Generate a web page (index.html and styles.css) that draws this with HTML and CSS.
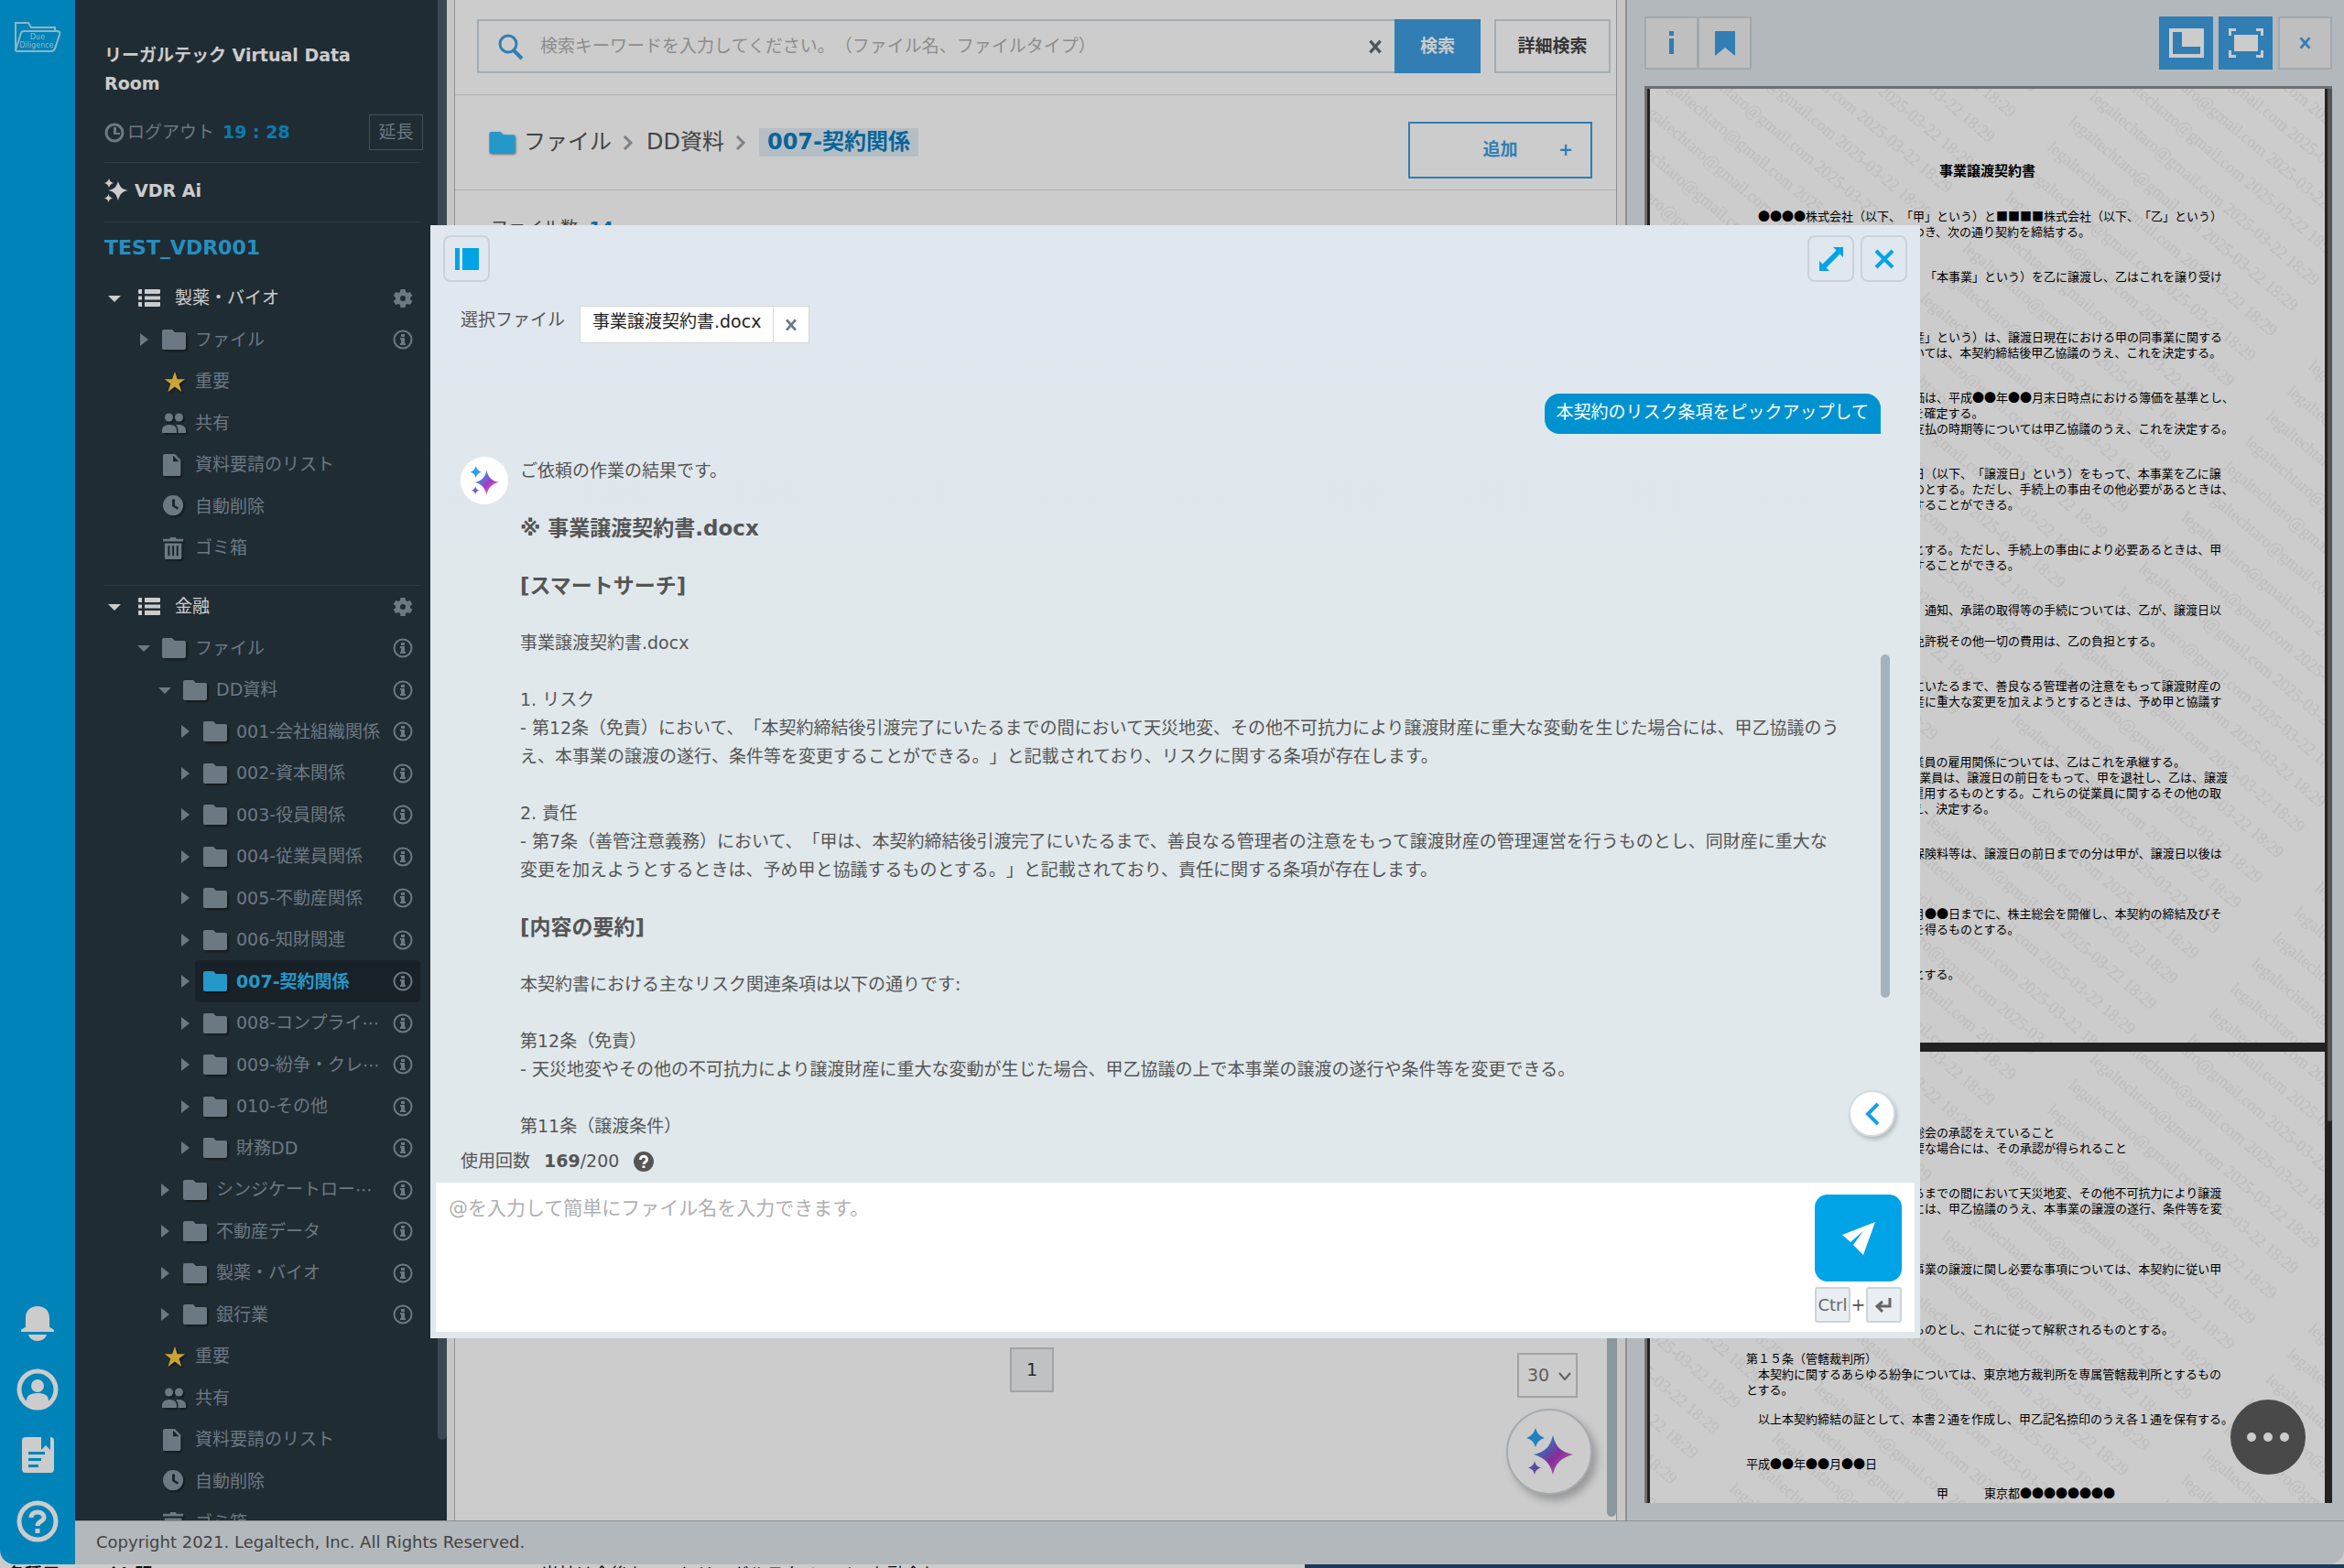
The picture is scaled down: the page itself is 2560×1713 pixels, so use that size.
FILE: index.html
```html
<!DOCTYPE html>
<html lang="ja">
<head>
  <meta charset="UTF-8" />
  <meta name="viewport" content="width=device-width, initial-scale=1" />
  <title>リーガルテック Virtual Data Room</title>
  <link rel="stylesheet" href="styles.css">
</head>

<body>
  <!-- Icons used more than once -->
  <svg class="sprite" aria-hidden="true">
    <defs>
      <linearGradient id="sparkMain" x1="0" y1="0" x2="1" y2="1">
        <stop offset="0.2" stop-color="#2f9be8" />
        <stop offset="0.55" stop-color="#a838c0" />
        <stop offset="0.8" stop-color="#d36ad0" />
      </linearGradient>
      <linearGradient id="sparkSmall" x1="0" y1="0" x2="1" y2="1">
        <stop offset="0" stop-color="#4a6fd8" />
        <stop offset="1" stop-color="#9a4cc0" />
      </linearGradient>
      <pattern id="mark" width="372" height="36" patternUnits="userSpaceOnUse" patternTransform="rotate(40)">
        <text class="mark-text" x="2" y="24">legaltechtaro@gmail.com 2025-03-22 18:29</text>
      </pattern>
    </defs>
    <symbol id="folder" viewBox="0 0 26 22"><path d="M2 0h9l3 3h10a2 2 0 0 1 2 2v15a2 2 0 0 1-2 2H2a2 2 0 0 1-2-2V2a2 2 0 0 1 2-2z" /></symbol>
    <symbol id="star" viewBox="0 0 26 26"><path d="M14 1l3 9h9l-7 5.500 3 9.500-8-6-8 6 3-9.500L2 10h9z" /></symbol>
    <symbol id="people" viewBox="0 0 26 22"><circle cx="7.500" cy="5" r="4.500" /><circle cx="18.500" cy="5" r="4.500" /><path d="M0 22v-3c0-4 4-6 8-6s8 2 8 6v3zM17.500 22v-3c0-2.500-1-4.500-2.500-5.600 5-1.400 11 .8 11 5.600v3z" /></symbol>
    <symbol id="doc" viewBox="0 0 26 26"><path d="M2 0h12l7 7v17a2 2 0 0 1-2 2H2a2 2 0 0 1-2-2V2a2 2 0 0 1 2-2zm10 2v7h7z" fill-rule="evenodd" /></symbol>
    <symbol id="clock-solid" viewBox="0 0 26 26"><path d="M12 0a12 12 0 1 1 0 24 12 12 0 0 1 0-24zm-1 5v8l6 4 1.500-2.500L14 12V5z" fill-rule="evenodd" /></symbol>
    <symbol id="trash" viewBox="0 0 26 26"><path d="M0 2h8l1-2h6l1 2h8v3H0zM2 7h20v17a2 2 0 0 1-2 2H4a2 2 0 0 1-2-2zm4 3v12h2V10zm5 0v12h2V10zm5 0v12h2V10z" fill-rule="evenodd" /></symbol>
    <symbol id="list" viewBox="0 0 24 20"><path d="M1 0h3v5H1a1 1 0 0 1-1-1V1a1 1 0 0 1 1-1zM7 0h16a1 1 0 0 1 1 1v3a1 1 0 0 1-1 1H7zM0 7.500h4v4H0zM7 7.500h17v4H7zM0 14h4v5H1a1 1 0 0 1-1-1zM7 14h17v4a1 1 0 0 1-1 1H7z" /></symbol>
    <symbol id="down" viewBox="0 0 22 22"><path d="M4 8h14l-7 7z" /></symbol>
    <symbol id="right" viewBox="0 0 22 22"><path d="M7 4l9 7-9 7z" /></symbol>
    <symbol id="info" viewBox="0 0 22 22"><circle cx="11" cy="11" r="9.500" fill="none" stroke="currentColor" stroke-width="2" /><path d="M9 5h4v3H9zM8 9h5v6h1v2H8v-2h1v-4H8z" /></symbol>
    <symbol id="gear" viewBox="0 0 22 22"><path d="M8.500 1h5l.6 3 1.800 1 3-1 2.400 4-2.300 2v2l2.300 2-2.400 4-3-1-1.800 1-.6 3h-5l-.6-3-1.800-1-3 1L.7 14 3 12v-2L.7 8l2.400-4 3 1 1.800-1zM11 8a3 3 0 1 0 0 6 3 3 0 0 0 0-6z" fill-rule="evenodd" /></symbol>
    <symbol id="cross" viewBox="0 0 20 20"><path d="M3 2l14 16M17 2L3 18" fill="none" stroke="currentColor" stroke-width="4" /></symbol>
    <symbol id="chevron" viewBox="0 0 12 18"><path d="M2 2l7 7-7 7" fill="none" stroke="currentColor" stroke-width="3" /></symbol>
    <symbol id="sparkle" viewBox="0 0 26 26"><path d="M15 3c2 6.500 4 8.500 11 10-7 1.500-9 4-11 11-2-7-4-9.500-11-11 7-1.500 9-3.500 11-10zM5 0c1 3 2 4.200 5 5-3 .8-4 2-5 5-1-3-2-4.200-5-5 3-.8 4-2 5-5zM4.500 17c.8 2.600 1.700 3.700 4.500 4.500-2.800.8-3.700 1.900-4.500 4.500-.8-2.600-1.700-3.700-4.500-4.500 2.800-.8 3.700-1.900 4.500-4.500z" /></symbol>
    <symbol id="sparkle-color" viewBox="0 0 52 52">
      <path d="M30 8c3 12 8 18 22 21-14 4-19 10-22 22-3-12-8-18-21-22 13-3 18-9 21-21z" fill="url(#sparkMain)" />
      <path d="M11 0c2 6 4 8.500 10 11-6 2-8 4-10 10-2-6-4-8-10-10 6-2.500 8-5 10-11z" fill="#2aa0f0" />
      <path d="M10 36c1 4.500 3 6.500 7 7.500-4 1-6 3-7 7.500-1-4.500-3-6.500-7-7.500 4-1 6-3 7-7.500z" fill="url(#sparkSmall)" />
    </symbol>
  </svg>

  <div class="window">
    <nav class="rail">
      <a href="#" class="rail-logo" aria-label="Due Diligence">
        <svg class="line" viewBox="0 0 52 34" width="52" height="34" stroke-width="2">
          <path d="M2 31V1h14l3 5h26v4M2 31L8 12c.5-1.500 1-2 3-2h36c3 0 4 1 3 4l-5 15c-1 2-2 3-4 3H3z" />
          <text x="26" y="19" class="logo-text">Due</text>
          <text x="25" y="28" class="logo-text">Diligence</text>
        </svg>
      </a>
      <div class="rail-menu">
        <a href="#" aria-label="通知">
          <svg viewBox="0 0 46 46" width="46" height="46"><path d="M23 4c8 0 13 5 13 13v9c0 2 5 2 5 5v1H5v-1c0-3 5-3 5-5v-9C10 9 15 4 23 4zM13 35h20c-1 4-5 7-10 7s-9-3-10-7z" /></svg>
        </a>
        <a href="#" aria-label="アカウント">
          <svg viewBox="0 0 46 46" width="46" height="46"><circle cx="23" cy="23" r="20" fill="none" stroke="currentColor" stroke-width="5" /><circle cx="23" cy="19" r="7" /><path d="M11 38v-3c0-6 5-8 12-8s12 2 12 8v3l-7 5H18z" /></svg>
        </a>
        <a href="#" aria-label="お知らせ">
          <svg viewBox="0 0 46 46" width="46" height="46"><path d="M10 3h17v14l5-5 5 5V3a4 4 0 0 1 4 4v31a4 4 0 0 1-4 4H10a4 4 0 0 1-4-4V7a4 4 0 0 1 4-4zm3 16v3h18v-3zm0 7v3h14v-3zm0 7v3h11v-3z" fill-rule="evenodd" /></svg>
        </a>
        <a href="#" aria-label="ヘルプ">
          <svg class="line" viewBox="0 0 46 46" width="46" height="46" stroke-width="5"><circle cx="23" cy="23" r="20" /><path d="M16 19c0-8 14-8 14 0 0 4-7 4-7 9M23 31v5" /></svg>
        </a>
      </div>
    </nav>

    <div class="app">
      <div class="workspace">
        <aside class="sidebar">
          <h1 class="site-name">リーガルテック Virtual Data Room</h1>
          <div class="session">
            <svg class="session-icon" viewBox="0 0 22 22"><circle cx="11" cy="11" r="9" fill="none" stroke="currentColor" stroke-width="3" /><path d="M10 5h3v6h4v2h-7z" /></svg>
            <span>ログアウト</span>
            <strong>19 : 28</strong>
            <button class="extend">延長</button>
          </div>
          <a href="#" class="vdr-ai"><svg class="vdr-icon"><use href="#sparkle" /></svg>VDR Ai</a>
          <h2 class="room-name">TEST_VDR001</h2>

          <ul class="tree">
            <li class="row root"><svg class="caret"><use href="#down" /></svg><a href="#" class="node"><svg class="icon"><use href="#list" /></svg><span>製薬・バイオ</span><svg class="info"><use href="#gear" /></svg></a></li>
            <li class="row level-1"><svg class="caret"><use href="#right" /></svg><a href="#" class="node"><svg class="icon"><use href="#folder" /></svg><span>ファイル</span><svg class="info"><use href="#info" /></svg></a></li>
            <li class="row leaf"><a href="#" class="node"><svg class="icon star"><use href="#star" /></svg><span>重要</span></a></li>
            <li class="row leaf"><a href="#" class="node"><svg class="icon"><use href="#people" /></svg><span>共有</span></a></li>
            <li class="row leaf"><a href="#" class="node"><svg class="icon"><use href="#doc" /></svg><span>資料要請のリスト</span></a></li>
            <li class="row leaf"><a href="#" class="node"><svg class="icon"><use href="#clock-solid" /></svg><span>自動削除</span></a></li>
            <li class="row leaf"><a href="#" class="node"><svg class="icon"><use href="#trash" /></svg><span>ゴミ箱</span></a></li>
          </ul>
          <ul class="tree">
            <li class="row root"><svg class="caret"><use href="#down" /></svg><a href="#" class="node"><svg class="icon"><use href="#list" /></svg><span>金融</span><svg class="info"><use href="#gear" /></svg></a></li>
            <li class="row level-1"><svg class="caret"><use href="#down" /></svg><a href="#" class="node"><svg class="icon"><use href="#folder" /></svg><span>ファイル</span><svg class="info"><use href="#info" /></svg></a></li>
            <li class="row level-2"><svg class="caret"><use href="#down" /></svg><a href="#" class="node"><svg class="icon"><use href="#folder" /></svg><span>DD資料</span><svg class="info"><use href="#info" /></svg></a></li>
            <li class="row level-3"><svg class="caret"><use href="#right" /></svg><a href="#" class="node"><svg class="icon"><use href="#folder" /></svg><span>001-会社組織関係</span><svg class="info"><use href="#info" /></svg></a></li>
            <li class="row level-3"><svg class="caret"><use href="#right" /></svg><a href="#" class="node"><svg class="icon"><use href="#folder" /></svg><span>002-資本関係</span><svg class="info"><use href="#info" /></svg></a></li>
            <li class="row level-3"><svg class="caret"><use href="#right" /></svg><a href="#" class="node"><svg class="icon"><use href="#folder" /></svg><span>003-役員関係</span><svg class="info"><use href="#info" /></svg></a></li>
            <li class="row level-3"><svg class="caret"><use href="#right" /></svg><a href="#" class="node"><svg class="icon"><use href="#folder" /></svg><span>004-従業員関係</span><svg class="info"><use href="#info" /></svg></a></li>
            <li class="row level-3"><svg class="caret"><use href="#right" /></svg><a href="#" class="node"><svg class="icon"><use href="#folder" /></svg><span>005-不動産関係</span><svg class="info"><use href="#info" /></svg></a></li>
            <li class="row level-3"><svg class="caret"><use href="#right" /></svg><a href="#" class="node"><svg class="icon"><use href="#folder" /></svg><span>006-知財関連</span><svg class="info"><use href="#info" /></svg></a></li>
            <li class="row level-3"><svg class="caret"><use href="#right" /></svg><a href="#" class="node active"><svg class="icon"><use href="#folder" /></svg><span>007-契約関係</span><svg class="info"><use href="#info" /></svg></a></li>
            <li class="row level-3"><svg class="caret"><use href="#right" /></svg><a href="#" class="node"><svg class="icon"><use href="#folder" /></svg><span>008-コンプライ⋯</span><svg class="info"><use href="#info" /></svg></a></li>
            <li class="row level-3"><svg class="caret"><use href="#right" /></svg><a href="#" class="node"><svg class="icon"><use href="#folder" /></svg><span>009-紛争・クレ⋯</span><svg class="info"><use href="#info" /></svg></a></li>
            <li class="row level-3"><svg class="caret"><use href="#right" /></svg><a href="#" class="node"><svg class="icon"><use href="#folder" /></svg><span>010-その他</span><svg class="info"><use href="#info" /></svg></a></li>
            <li class="row level-3"><svg class="caret"><use href="#right" /></svg><a href="#" class="node"><svg class="icon"><use href="#folder" /></svg><span>財務DD</span><svg class="info"><use href="#info" /></svg></a></li>
            <li class="row level-2"><svg class="caret"><use href="#right" /></svg><a href="#" class="node"><svg class="icon"><use href="#folder" /></svg><span>シンジケートロー⋯</span><svg class="info"><use href="#info" /></svg></a></li>
            <li class="row level-2"><svg class="caret"><use href="#right" /></svg><a href="#" class="node"><svg class="icon"><use href="#folder" /></svg><span>不動産データ</span><svg class="info"><use href="#info" /></svg></a></li>
            <li class="row level-2"><svg class="caret"><use href="#right" /></svg><a href="#" class="node"><svg class="icon"><use href="#folder" /></svg><span>製薬・バイオ</span><svg class="info"><use href="#info" /></svg></a></li>
            <li class="row level-2"><svg class="caret"><use href="#right" /></svg><a href="#" class="node"><svg class="icon"><use href="#folder" /></svg><span>銀行業</span><svg class="info"><use href="#info" /></svg></a></li>
            <li class="row leaf"><a href="#" class="node"><svg class="icon star"><use href="#star" /></svg><span>重要</span></a></li>
            <li class="row leaf"><a href="#" class="node"><svg class="icon"><use href="#people" /></svg><span>共有</span></a></li>
            <li class="row leaf"><a href="#" class="node"><svg class="icon"><use href="#doc" /></svg><span>資料要請のリスト</span></a></li>
            <li class="row leaf"><a href="#" class="node"><svg class="icon"><use href="#clock-solid" /></svg><span>自動削除</span></a></li>
            <li class="row leaf"><a href="#" class="node"><svg class="icon"><use href="#trash" /></svg><span>ゴミ箱</span></a></li>
          </ul>
          <div class="thumb sidebar-thumb"></div>
        </aside>

        <main class="main">
          <form class="search">
            <div class="search-box">
              <svg class="line" viewBox="0 0 30 30" width="30" height="30"><circle cx="12" cy="12" r="9" stroke-width="3" /><path d="M18 19l9 9" stroke-width="4" /></svg>
              <input type="text" aria-label="検索キーワード" placeholder="検索キーワードを入力してください。（ファイル名、ファイルタイプ）" />
              <button type="button" class="clear" aria-label="クリア"><svg><use href="#cross" /></svg></button>
            </div>
            <button type="button" class="search-button">検索</button>
            <button type="button" class="detail-button">詳細検索</button>
          </form>
          <div class="path">
            <svg class="path-folder"><use href="#folder" /></svg>
            <a href="#">ファイル</a>
            <svg class="path-arrow"><use href="#chevron" /></svg>
            <a href="#">DD資料</a>
            <svg class="path-arrow"><use href="#chevron" /></svg>
            <a href="#" class="current">007-契約関係</a>
            <button class="add-button"><span>追加</span><b>+</b></button>
          </div>
          <p class="count">ファイル数: <strong>14</strong></p>
          <div class="pager">
            <button class="page-button">1</button>
            <label class="page-size">
              <select aria-label="表示件数"><option>30</option></select>
              <svg class="line" viewBox="0 0 14 14" width="14" height="14" stroke-width="2"><path d="M1 4l6 7 6-7" /></svg>
            </label>
          </div>
          <button class="ai-fab" aria-label="VDR Ai"><svg width="52" height="52"><use href="#sparkle-color" /></svg></button>
          <div class="thumb main-thumb"></div>
        </main>

        <section class="preview">
          <div class="preview-bar">
            <button class="tool" aria-label="情報"><svg viewBox="0 0 30 36" width="30" height="36"><path d="M12 5h5v5h-5zM12 13h5v17h-5z" /></svg></button>
            <button class="tool" aria-label="ブックマーク"><svg viewBox="0 0 30 36" width="30" height="36"><path d="M4 5h22v27l-11-9-11 9z" /></svg></button>
            <span class="grow"></span>
            <button class="tool solid" aria-label="分割表示"><svg viewBox="0 0 38 32" width="38" height="32"><path d="M0 0h38v32H0zm4 4v24h30v-8H14V4z" fill-rule="evenodd" /></svg></button>
            <button class="tool solid" aria-label="全画面"><svg viewBox="0 0 38 32" width="38" height="32"><path d="M6 7h26v18H6zM0 0h8v3H3v5H0zM30 0h8v8h-3V3h-5zM0 24h3v5h5v3H0zM35 24h3v8h-8v-3h5z" /></svg></button>
            <button class="tool" aria-label="閉じる"><svg width="15" height="14"><use href="#cross" /></svg></button>
          </div>

          <div class="viewer">
            <article class="page page-one">
              <h2>事業譲渡契約書</h2>
              <p>　●●●●株式会社（以下、「甲」という）と■■■■株式会社（以下、「乙」という）
は、甲が営む下記の事業譲渡につき、次の通り契約を締結する。</p>
              <p>第１条（事業譲渡）
　甲は、甲の営む全事業（以下、「本事業」という）を乙に譲渡し、乙はこれを譲り受け
る。</p>
              <p>第２条（譲渡財産）
　前項の財産（以下、「譲渡財産」という）は、譲渡日現在における甲の同事業に関する
資産とし、その明細と範囲については、本契約締結後甲乙協議のうえ、これを決定する。</p>
              <p>第３条（譲渡代金）
　本事業にかかる譲渡財産の対価は、平成●●年●●月末日時点における簿価を基準とし、
甲乙協議のうえで譲渡代金の額を確定する。
２　前項に定めた譲渡代金等の支払の時期等については甲乙協議のうえ、これを決定する。</p>
              <p>第４条（譲渡日）
　甲は、平成●●年●●月●●日（以下、「譲渡日」という）をもって、本事業を乙に譲
渡し、乙はこれを譲り受けるものとする。ただし、手続上の事由その他必要があるときは、
甲乙協議のうえ、この日を変更することができる。</p>
              <p>第５条（引渡）
　譲渡財産の引渡期日は譲渡日とする。ただし、手続上の事由により必要あるときは、甲
乙協議のうえ、引渡期日を変更することができる。</p>
              <p>第６条（移転手続）
　譲渡財産の移転に伴う登記等、通知、承諾の取得等の手続については、乙が、譲渡日以
後遅滞なく行う。
２　前項の手続きに要する登録免許税その他一切の費用は、乙の負担とする。</p>
              <p>第７条（善管注意義務）
　甲は、本契約締結後引渡完了にいたるまで、善良なる管理者の注意をもって譲渡財産の
管理運営を行うものとし、同財産に重大な変更を加えようとするときは、予め甲と協議す
るものとする。</p>
              <p>第８条（従業員）
　甲の本事業に従事している従業員の雇用関係については、乙はこれを承継する。
2　前項の規定に基づき本件の従業員は、譲渡日の前日をもって、甲を退社し、乙は、譲渡
日の当日をもってこれらの者を雇用するものとする。これらの従業員に関するその他の取
扱いに関しては、甲乙協議のうえ、決定する。</p>
              <p>第９条（公租公課）
　譲渡財産にかかる公租公課、保険料等は、譲渡日の前日までの分は甲が、譲渡日以後は
乙が負担する。</p>
              <p>第１０条（株主総会）
　甲及び乙は、平成●●年●●月●●日までに、株主総会を開催し、本契約の締結及びそ
の履行につき必要な一切の承認を得るものとする。</p>
              <p>第１１条（競業避止）
　甲は競業避止義務を負うものとする。</p>
              <svg class="watermark" aria-hidden="true"><rect width="100%" height="100%" fill="url(#mark)" /></svg>
            </article>
            <article class="page page-two">
              <p>（１）譲渡日までに甲乙の株主総会の承認をえていること
（２）関係官庁等の承認等が必要な場合には、その承認が得られること</p>
              <p>第１２条（免責）
　本契約締結後引渡完了にいたるまでの間において天災地変、その他不可抗力により譲渡
財産に重大な変動を生じた場合には、甲乙協議のうえ、本事業の譲渡の遂行、条件等を変
更することができる。</p>
              <p>第１３条（協議）
　本契約に定めのない事項で本事業の譲渡に関し必要な事項については、本契約に従い甲
乙協議して定める。</p>
              <p>第１４条（準拠法）
　本契約は、日本法に準拠するものとし、これに従って解釈されるものとする。</p>
              <p>第１５条（管轄裁判所）
　本契約に関するあらゆる紛争については、東京地方裁判所を専属管轄裁判所とするもの
とする。</p>
              <p>　以上本契約締結の証として、本書２通を作成し、甲乙記名捺印のうえ各１通を保有する。</p>
              <p class="sign-date">平成●●年●●月●●日</p>
              <p>　　　　　　　　　　　　　　　　甲　　　東京都●●●●●●●●</p>
              <svg class="watermark" aria-hidden="true"><rect width="100%" height="100%" fill="url(#mark)" /></svg>
            </article>
            <div class="thumb viewer-thumb"></div>
            <button class="more" aria-label="メニュー"><i></i><i></i><i></i></button>
          </div>
        </section>
      </div>

      <footer class="footer">Copyright 2021. Legaltech, Inc. All Rights Reserved.</footer>
    </div>

    <!-- AI chat -->
    <div class="overlay"></div>
    <div class="chat" role="dialog" aria-label="VDR Ai">
      <div class="chat-bar">
        <button class="chat-tool" aria-label="履歴"><svg viewBox="0 0 26 24" width="26" height="24"><path d="M0 0h5v24H0zM8 0h18v24H8z" /></svg></button>
        <span class="grow"></span>
        <button class="chat-tool" aria-label="拡大"><svg viewBox="0 0 26 26" width="26" height="26"><path d="M15 0h11v11l-3.500-3.500-15 15L11 26H0V15l3.500 3.500 15-15z" /></svg></button>
        <button class="chat-tool" aria-label="閉じる"><svg class="line" viewBox="0 0 22 22" width="22" height="22" stroke-width="4"><path d="M2 2l18 18M20 2L2 20" /></svg></button>
      </div>
      <div class="chat-files">
        <span>選択ファイル</span>
        <span class="chip">事業譲渡契約書.docx<button aria-label="削除"><svg width="14" height="14"><use href="#cross" /></svg></button></span>
      </div>
      <div class="chat-log">
        <p class="question">本契約のリスク条項をピックアップして</p>
        <div class="answer">
          <span class="avatar"><svg width="32" height="32"><use href="#sparkle-color" /></svg></span>
          <div class="answer-text">
            <p>ご依頼の作業の結果です。</p>
            <h3>※ 事業譲渡契約書.docx</h3>
            <h3>[スマートサーチ]</h3>
            <p>事業譲渡契約書.docx</p>
            <p>1. リスク<br>- 第12条（免責）において、「本契約締結後引渡完了にいたるまでの間において天災地変、その他不可抗力により譲渡財産に重大な変動を生じた場合には、甲乙協議のうえ、本事業の譲渡の遂行、条件等を変更することができる。」と記載されており、リスクに関する条項が存在します。</p>
            <p>2. 責任<br>- 第7条（善管注意義務）において、「甲は、本契約締結後引渡完了にいたるまで、善良なる管理者の注意をもって譲渡財産の管理運営を行うものとし、同財産に重大な変更を加えようとするときは、予め甲と協議するものとする。」と記載されており、責任に関する条項が存在します。</p>
            <h3>[内容の要約]</h3>
            <p>本契約書における主なリスク関連条項は以下の通りです:</p>
            <p>第12条（免責）<br>- 天災地変やその他の不可抗力により譲渡財産に重大な変動が生じた場合、甲乙協議の上で本事業の譲渡の遂行や条件等を変更できる。</p>
            <p>第11条（譲渡条件）</p>
          </div>
        </div>
      </div>
      <p class="usage">使用回数 <span><strong>169</strong>/200</span>
        <svg viewBox="0 0 24 24" width="24" height="24"><circle cx="12" cy="12" r="11" fill="#555" /><path d="M8.500 10c0-5 7-5 7 0 0 2.500-3.500 2.500-3.500 5M12 16.500V19" fill="none" stroke="#fff" stroke-width="3" /></svg>
      </p>
      <form class="composer">
        <textarea aria-label="メッセージ" placeholder="@を入力して簡単にファイル名を入力できます。"></textarea>
        <div class="send-side">
          <button type="button" class="send" aria-label="送信"><svg viewBox="0 0 38 38" width="38" height="38"><path d="M37 1L1 15l9 8 14-12-11 15 11 11z" /></svg></button>
          <div class="keys"><kbd>Ctrl</kbd><span>+</span><kbd><svg class="line" viewBox="0 0 20 18" width="20" height="18" stroke-width="3"><path d="M17 1v9H4M9 5l-6 5 6 6" /></svg></kbd></div>
        </div>
      </form>
      <div class="thumb chat-thumb"></div>
      <button class="back" aria-label="戻る"><svg class="line" viewBox="0 0 18 26" width="18" height="26" stroke-width="4"><path d="M15 2L4 13l11 11" /></svg></button>
    </div>
  </div>

  <!-- Sliver of the page behind the window -->
  <div class="behind"><span class="behind-a">各種用 ソハイト明</span><span class="behind-b">当社は今後も、AIとリーガルテクノロジーを融合し</span><span class="behind-c"></span></div>
</body>
</html>
```

FILE: styles.css
```css
* {
  margin: 0;
  padding: 0;
  box-sizing: border-box;
}

body {
  font-family: "DejaVu Sans", "Noto Sans CJK JP", sans-serif;
  font-size: 19px;
  line-height: 31px;
  color: #555;
  background-color: #ccc;
  height: 100vh;
  display: flex;
  flex-direction: column;
  overflow: hidden;
  text-spacing-trim: space-all;
}

button,
input,
textarea,
select {
  font: inherit;
  color: inherit;
  background: none;
  border: none;
  outline: none;
}

button {
  cursor: pointer;
  display: flex;
  align-items: center;
  justify-content: center;
}

a {
  color: inherit;
  text-decoration: none;
}

svg {
  fill: currentColor;
  flex-shrink: 0;
}

svg.line {
  fill: none;
  stroke: currentColor;
}

.sprite {
  position: absolute;
  width: 0;
  height: 0;
}

.grow {
  flex: 1;
}

/* Drawn scrollbar handles */
.thumb {
  position: absolute;
  border-radius: 5px;
}

.window {
  flex: 1;
  min-height: 0;
  position: relative;
  display: flex;
  overflow: hidden;
  border-radius: 0 0 16px 16px;
}

/* Left icon rail */
.rail {
  width: 82px;
  background-color: #00a4e6;
  color: #fff;
  display: flex;
  flex-direction: column;
  align-items: center;
  justify-content: space-between;
  padding: 24px 0;
}

.logo-text {
  font-size: 8px;
  fill: #fff;
  stroke: none;
  text-anchor: middle;
}

.rail-logo {
  opacity: 0.7;
}

.rail-menu {
  display: flex;
  flex-direction: column;
  gap: 26px;
}

.rail-menu a {
  display: flex;
}

.app {
  flex: 1;
  min-width: 0;
  display: flex;
  flex-direction: column;
}

.workspace {
  flex: 1;
  min-height: 0;
  display: flex;
  background-color: #f8f8f8;
}

/* Sidebar */
.sidebar {
  width: 406px;
  flex-shrink: 0;
  position: relative;
  overflow: hidden;
  background-color: #293841;
  color: #8797a3;
  padding: 45px 29px 0 32px;
}

.site-name {
  font-size: 19px;
  color: #fff;
  padding-right: 40px;
}

.session {
  display: flex;
  align-items: center;
  height: 70px;
  padding-top: 5px;
  margin-right: -3px;
}

.session-icon {
  width: 22px;
  height: 22px;
  margin-right: 3px;
}

.session strong {
  color: #0c9bda;
  margin-left: 9px;
}

.extend {
  margin-left: auto;
  width: 59px;
  height: 39px;
  border: 1px solid #566570;
}

.vdr-ai {
  display: flex;
  align-items: center;
  height: 66px;
  padding-bottom: 4px;
  border-top: 1px solid #3c4c57;
  border-bottom: 1px solid #3c4c57;
  color: #fff;
  font-weight: bold;
}

.vdr-icon {
  width: 26px;
  height: 26px;
  margin-right: 7px;
}

.room-name {
  font-size: 22px;
  line-height: 56px;
  margin-bottom: 4px;
  color: #2db3f0;
}

.tree {
  list-style: none;
}

.tree + .tree {
  border-top: 1px solid #3c4c57;
  margin-top: 18px;
}

.row {
  display: flex;
  align-items: center;
  height: 45px;
}

.row:nth-child(even) {
  height: 46px;
}

.level-1 {
  padding-left: 32px;
}

.level-2 {
  padding-left: 55px;
}

.level-3 {
  padding-left: 77px;
}

.leaf {
  padding-left: 54px;
}

.caret {
  width: 22px;
  height: 22px;
}

.node {
  flex: 1;
  height: 100%;
  display: flex;
  align-items: center;
  gap: 10px;
  padding-left: 9px;
  border-radius: 4px;
  white-space: nowrap;
}

.node.active {
  background-color: #202a33;
  color: #2dbffb;
  font-weight: bold;
}

.root {
  color: #fff;
}

.root .node {
  gap: 16px;
  padding-left: 15px;
}

.icon {
  width: 26px;
  height: 24px;
  filter: drop-shadow(2px 2px 1px rgba(0, 0, 0, 0.4));
}

.root .icon {
  width: 24px;
  height: 20px;
  filter: none;
}

.star {
  color: #ffce42;
}

.info {
  width: 22px;
  height: 22px;
  margin-left: auto;
  margin-right: 8px;
  color: #8797a3;
}

.sidebar-thumb {
  right: 0;
  top: -10px;
  bottom: 88px;
  width: 10px;
  background-color: #485a69;
}

/* File list */
.main {
  flex: 1;
  min-width: 0;
  position: relative;
  display: flex;
  flex-direction: column;
  margin: 0 9px 0 8px;
  background-color: #fff;
  border-left: 1px solid #b5b5b5;
  border-right: 1px solid #b5b5b5;
}

.search {
  display: flex;
  padding: 21px 6px 23px 24px;
  border-bottom: 1px solid #dcdce4;
}

.search-box {
  flex: 1;
  height: 59px;
  display: flex;
  align-items: center;
  border: 2px solid #ced8de;
  border-right: none;
  padding-left: 20px;
  color: #3c9ee0;
}

.search-box input {
  flex: 1;
  padding-left: 17px;
  color: #555;
}

.search-box input::placeholder {
  color: #b0b0b0;
}

.clear {
  width: 42px;
  height: 42px;
  color: #5d6b78;
}

.clear svg {
  width: 16px;
  height: 16px;
}

.search-button {
  width: 94px;
  background-color: #3c9ee0;
  color: #fff;
  font-weight: bold;
}

.detail-button {
  width: 127px;
  margin-left: 15px;
  border: 2px solid #ced8de;
  color: #444;
  font-weight: bold;
}

.path {
  height: 104px;
  display: flex;
  align-items: center;
  padding: 0 26px 0 37px;
  border-bottom: 1px solid #dcdce4;
  font-size: 24px;
}

.path-folder {
  width: 29px;
  height: 24px;
  margin-right: 9px;
  color: #2dbffb;
  filter: drop-shadow(1px 1px 1px rgba(0, 0, 0, 0.4));
}

.path-arrow {
  width: 12px;
  height: 18px;
  margin: 0 14px 0 12px;
  color: #a0a0aa;
}

.path .current {
  padding: 0 9px;
  background-color: #e3eef5;
  color: #0b7ec0;
  font-weight: bold;
}

.add-button {
  margin-left: auto;
  align-self: flex-end;
  margin-bottom: 12px;
  padding-bottom: 2px;
  width: 201px;
  height: 62px;
  border: 2px solid #3c9ee0;
  color: #3c9ee0;
  font-size: 19px;
  font-weight: bold;
  display: grid;
  grid-template-columns: 1fr auto 1fr;
}

.add-button span {
  grid-column: 2;
}

.add-button b {
  justify-self: end;
  padding-right: 19px;
}

.count {
  flex: 1;
  padding: 26px 39px;
}

.count strong {
  color: #0b86c8;
}

.pager {
  display: grid;
  grid-template-columns: 1fr auto 1fr;
  align-items: start;
  padding: 0 42px 134px 34px;
}

.page-button {
  grid-column: 2;
  width: 48px;
  height: 49px;
  background-color: #f0f2f4;
  border: 2px solid #ccc;
  color: #333;
}

.page-size {
  justify-self: end;
  margin-top: 6px;
  width: 66px;
  height: 49px;
  border: 2px solid #ccc;
  display: flex;
  align-items: center;
  padding: 0 5px 0 9px;
  color: #777;
}

.page-size select {
  flex: 1;
  min-width: 0;
  appearance: none;
}

.ai-fab {
  position: absolute;
  right: 26px;
  bottom: 28px;
  width: 94px;
  height: 94px;
  border: 2px solid #d0d6dc;
  border-radius: 50%;
  background-color: #fff;
  box-shadow: 5px 6px 8px rgba(0, 0, 0, 0.25);
}

.main-thumb {
  right: 0;
  top: 600px;
  bottom: 4px;
  width: 10px;
  background-color: #adbdc7;
}

/* Document preview */
.preview {
  width: 785px;
  flex-shrink: 0;
  display: flex;
  flex-direction: column;
  padding: 18px 13px 19px 19px;
  background-color: #e0e6eb;
  border-left: 2px solid #b5b5b5;
}

.preview-bar {
  display: flex;
  gap: 6px;
  margin-bottom: 18px;
}

.tool {
  width: 59px;
  height: 58px;
  border: 2px solid #ccd3d9;
  background-color: #efefef;
  color: #3c9ee0;
}

.tool + .tool:nth-child(2) {
  margin-left: -7px;
}

.tool.solid {
  background-color: #3c9ee0;
  border: none;
  color: #fff;
}

.viewer {
  flex: 1;
  min-height: 0;
  position: relative;
  overflow: hidden;
  background-color: #2b2b2b;
  border-top: 3px solid #8c8c8c;
  border-left: 3px solid #8c8c8c;
  padding: 0 8px 0 3px;
}

.page {
  position: relative;
  background-color: #fff;
  color: #000;
  font-family: "Noto Sans CJK JP", sans-serif;
  font-size: 13px;
  line-height: 17px;
  padding: 0 105px;
}

.page-one {
  height: 1042px;
  padding-top: 74px;
  margin-bottom: 10px;
}

.page-two {
  height: 1042px;
  padding-top: 79px;
}

.page h2 {
  font-size: 15px;
  line-height: 30px;
  margin-bottom: 26px;
  text-align: center;
}

.page p {
  margin-bottom: 15px;
  white-space: pre;
}

.page .sign-date {
  margin-top: 32px;
}

.watermark {
  position: absolute;
  top: 0;
  left: 0;
  width: 100%;
  height: 100%;
}

.mark-text {
  font-family: "Liberation Serif", serif;
  font-size: 18px;
  fill: rgba(0, 0, 0, 0.08);
}

.viewer-thumb {
  right: 0;
  top: -10px;
  width: 5px;
  height: 1138px;
  background-color: #6a6a6a;
}

.more {
  position: absolute;
  right: 29px;
  bottom: 31px;
  width: 82px;
  height: 82px;
  border-radius: 50%;
  background-color: #5c5c5c;
  gap: 8px;
}

.more i {
  width: 10px;
  height: 10px;
  border-radius: 50%;
  background-color: #fff;
}

.footer {
  height: 48px;
  line-height: 46px;
  padding-left: 23px;
  font-size: 18px;
  background-color: #e0e6eb;
  border-top: 1px solid #b5b5b5;
}

/* Chat window */
.overlay {
  position: absolute;
  inset: 0;
  background-color: rgba(0, 0, 0, 0.2);
}

.chat {
  position: absolute;
  left: 470px;
  right: 463px;
  top: 246px;
  bottom: 247px;
  display: flex;
  flex-direction: column;
  padding: 11px 6px 7px;
  background: linear-gradient(#e0e7ef, #e0e8eb 40%);
}

.chat-bar {
  display: flex;
  gap: 7px;
  padding: 0 8px;
}

.chat-tool {
  width: 51px;
  height: 51px;
  border: 2px solid #c9d1dc;
  border-radius: 8px;
  color: #00a4e6;
}

.chat-files {
  display: flex;
  gap: 16px;
  margin-top: 26px;
  padding-left: 27px;
}

.chip {
  height: 41px;
  line-height: 33px;
  display: flex;
  padding-left: 13px;
  background-color: #fff;
  border: 1px solid #d5d8dc;
  color: #222;
}

.chip button {
  width: 39px;
  margin-left: 13px;
  border-left: 1px solid #d5d8dc;
  color: #6b7a8a;
}

.chat-log {
  flex: 1;
  min-height: 0;
  overflow: hidden;
  margin-top: 55px;
  padding: 0 37px 0 27px;
}

.question {
  width: fit-content;
  margin-left: auto;
  padding: 5px 13px 8px;
  border-radius: 16px 16px 0 16px;
  background-color: #0092d0;
  color: #fff;
}

.answer {
  display: flex;
  gap: 13px;
  margin-top: 25px;
}

.avatar {
  width: 52px;
  height: 52px;
  border-radius: 50%;
  background-color: #fff;
  display: flex;
  align-items: center;
  justify-content: center;
}

.answer-text {
  width: 1443px;
}

.answer-text p,
.answer-text h3 {
  margin-bottom: 31px;
}

.answer-text h3 {
  font-size: 23px;
  line-height: 32px;
}

.usage {
  display: flex;
  align-items: center;
  gap: 15px;
  padding: 7px 27px 8px;
}

.composer {
  height: 163px;
  display: flex;
  background-color: #fff;
  padding: 13px 14px 0;
}

.composer textarea {
  flex: 1;
  resize: none;
  font-size: 21px;
}

.composer textarea::placeholder {
  color: #b0b0b0;
}

.send-side {
  width: 95px;
}

.send {
  width: 95px;
  height: 95px;
  border-radius: 14px;
  background-color: #00a4e6;
  color: #fff;
}

.keys {
  display: flex;
  justify-content: space-between;
  align-items: center;
  margin-top: 6px;
}

kbd {
  width: 39px;
  height: 39px;
  display: flex;
  align-items: center;
  justify-content: center;
  font-family: inherit;
  font-size: 18px;
  background-color: #e9eef2;
  border: 2px solid #ccd4da;
  border-radius: 3px;
  color: #666;
}

.chat-thumb {
  right: 33px;
  top: 469px;
  width: 10px;
  height: 375px;
  background-color: #a2b3be;
}

.back {
  position: absolute;
  right: 27px;
  bottom: 220px;
  width: 51px;
  height: 51px;
  border-radius: 50%;
  background-color: #fff;
  border: 2px solid #d3dbe0;
  color: #1a9fe0;
  box-shadow: 2px 3px 4px rgba(0, 0, 0, 0.2);
}

.behind {
  height: 4px;
  display: flex;
  line-height: 22px;
  overflow: hidden;
  color: #111;
}

.behind-a {
  width: 575px;
  padding-left: 8px;
  font-weight: bold;
}

.behind-b {
  width: 850px;
  padding-left: 16px;
}

.behind-c {
  flex: 1;
  background-color: #1b3a57;
}
```
